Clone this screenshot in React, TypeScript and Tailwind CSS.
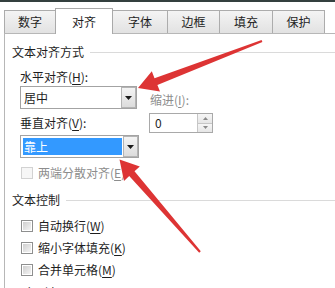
import React from 'react';

const tabs = [
  { label: '数字', cls: 'w-[52px]' },
  { label: '对齐', cls: 'w-[58px]', active: true },
  { label: '字体', cls: 'w-[56px]' },
  { label: '边框', cls: 'w-[53px]' },
  { label: '填充', cls: 'w-[54px]' },
  { label: '保护', cls: 'w-[53px]' },
];

function Key({ k }: { k: string }) {
  return <span className="underline underline-offset-[2px]">{k}</span>;
}

function CheckBox({ disabled }: { disabled?: boolean }) {
  if (disabled) {
    return <span className="block w-[12px] h-[12px] shrink-0 border border-[#d2d2d2] bg-[#f6f6f6]" />;
  }
  return (
    <span className="block w-[12px] h-[12px] shrink-0 border border-[#8e8f8f] bg-white p-[1px]">
      <span className="block w-full h-full bg-linear-to-br from-[#cfcfcf] to-[#f4f4f4]" />
    </span>
  );
}

function DropButton() {
  return (
    <div className="w-[15px] h-full flex items-center justify-center border border-[#b4b4b4] bg-linear-to-b from-[#f4f4f4] to-[#dcdcdc]">
      <svg width="7" height="4" viewBox="0 0 7 4">
        <path d="M0 0h7L3.5 4z" fill="#1a1a1a" />
      </svg>
    </div>
  );
}

function SectionTitle({ text }: { text: string }) {
  return (
    <div className="flex items-center h-4">
      <span>{text}</span>
      <span className="flex-1 h-px bg-[#dadada] ml-[6px]" />
    </div>
  );
}

export default function App() {
  return (
    <div className="relative w-[335px] h-[288px] overflow-hidden bg-white text-[12px] leading-4 text-[#1e1e1e] font-['Noto_Sans_CJK_SC','Noto_Sans',sans-serif]">
      <div className="h-[2px] bg-[#34403f]" />

      {/* Tabs */}
      <div className="flex items-end h-[31px] pl-[4px]">
        {tabs.map((t, i) =>
          t.active ? (
            <div
              key={t.label}
              className={`${t.cls} relative z-10 -ml-px -mb-px h-[26px] flex items-center justify-center border-t border-x border-[#a9a9a9] bg-white`}
            >
              {t.label}
            </div>
          ) : (
            <div
              key={t.label}
              className={`${t.cls} ${i === 0 ? '' : '-ml-px'} h-[23px] flex items-center justify-center border-t border-x border-[#acacac] bg-linear-to-b from-[#f4f4f4] to-[#e2e2e2]`}
            >
              {t.label}
            </div>
          )
        )}
      </div>

      {/* Panel */}
      <div className="ml-[4px] w-[340px] h-[260px] border-l border-t border-[#b7b7b7] pl-[7px] pt-[10px]">
        <SectionTitle text="文本对齐方式" />

        <div className="flex mt-[9px] ml-[8px]">
          <div className="w-[119px] flex flex-col">
            <div className="h-4">
              水平对齐(<Key k="H" />):
            </div>
            <div className="mt-[1px] w-[117px] h-[23px] flex border border-[#a3a3a3] bg-white">
              <div className="flex-1 flex items-center pl-[3px]">居中</div>
              <DropButton />
            </div>
            <div className="mt-[6px] h-4">
              垂直对齐(<Key k="V" />):
            </div>
            <div className="mt-[4px] w-[119px] h-[23px] flex border border-[#a3a3a3] bg-white p-[2px] pr-0">
              <div className="flex-1 flex items-center pl-[1px] mr-[1px] bg-[#3399ff] text-white">靠上</div>
              <div className="-my-[2px] h-[21px]">
                <DropButton />
              </div>
            </div>
            <div className="mt-[8px] h-[14px] flex items-center gap-[5px] pl-px text-[#8d8d8d]">
              <CheckBox disabled />
              <span>
                两端分散对齐(<Key k="E" />)
              </span>
            </div>
          </div>

          <div className="ml-[10px] pt-[23px] flex flex-col">
            <div className="h-4 pl-px text-[#8d8d8d]">
              缩进(<Key k="I" />):
            </div>
            <div className="mt-[5px] w-[64px] h-[20px] flex border border-[#a9a9a9] bg-white">
              <div className="flex-1 flex items-center pl-[5px]">0</div>
              <div className="w-[15px] flex flex-col border-l border-[#c6c6c6]">
                <div className="flex-1 flex items-center justify-center border-b border-[#c6c6c6] bg-linear-to-b from-[#f6f6f6] to-[#e6e6e6]">
                  <svg width="5" height="3" viewBox="0 0 5 3">
                    <path d="M0 3h5L2.5 0z" fill="#8a8a8a" />
                  </svg>
                </div>
                <div className="flex-1 flex items-center justify-center bg-linear-to-b from-[#f6f6f6] to-[#e6e6e6]">
                  <svg width="5" height="3" viewBox="0 0 5 3">
                    <path d="M0 0h5L2.5 3z" fill="#8a8a8a" />
                  </svg>
                </div>
              </div>
            </div>
          </div>
        </div>

        <div className="mt-[12px]">
          <SectionTitle text="文本控制" />
        </div>

        <div className="mt-[10px] ml-[9px] flex flex-col gap-[6px]">
          <div className="h-4 flex items-center gap-[5px]">
            <CheckBox />
            <span>
              自动换行(<Key k="W" />)
            </span>
          </div>
          <div className="h-4 flex items-center gap-[5px]">
            <CheckBox />
            <span>
              缩小字体填充(<Key k="K" />)
            </span>
          </div>
          <div className="h-4 flex items-center gap-[5px]">
            <CheckBox />
            <span>
              合并单元格(<Key k="M" />)
            </span>
          </div>
        </div>

        <div className="mt-[7px]">
          <SectionTitle text="从右到左" />
        </div>
      </div>

      {/* Red annotation arrows */}
      <svg className="absolute inset-0 pointer-events-none" width="335" height="288" viewBox="0 0 335 288">
        <polygon
          points="261.6,39.9 154.5,78.3 151.8,71.3 138,88 160,91.5 157.4,85 262.4,42.1"
          fill="#dd3434"
        />
        <polygon
          points="200.8,251.2 134.5,171.2 139.8,166.6 119.5,159.5 124,181 129.2,176.1 199.2,252.8"
          fill="#dd3434"
        />
      </svg>
    </div>
  );
}
